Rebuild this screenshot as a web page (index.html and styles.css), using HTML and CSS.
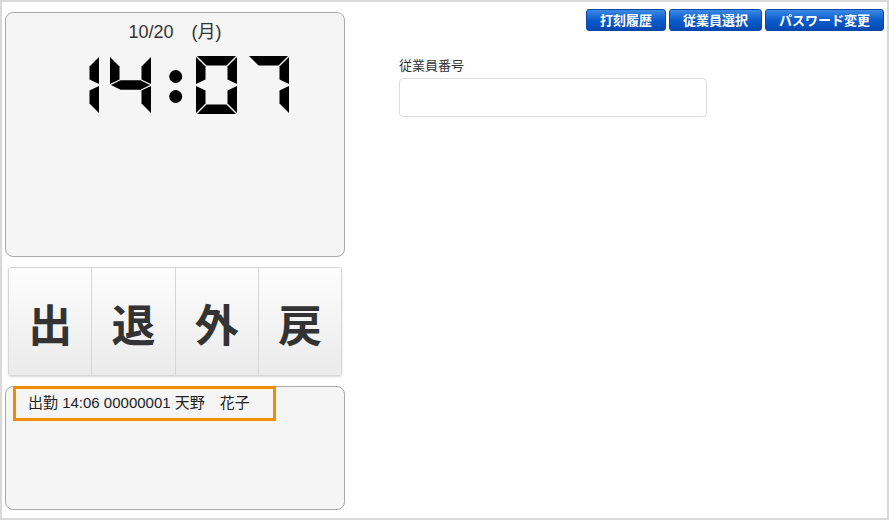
FILE: index.html
```html
<!DOCTYPE html>
<html lang="ja">
<head>
<meta charset="utf-8">
<title>打刻</title>
<link rel="stylesheet" href="styles.css">
</head>
<body>
<div class="frame">
  <div class="left">
    <div class="clock">
      <div class="date">10/20　(月)</div>
      <svg class="digits" width="339" height="66" viewBox="0 0 339 66" aria-label="14:07">
        <defs>
          <polygon id="sa" points="1,0 40,0 30.5,9.5 10.5,9.5"/>
          <polygon id="sb" points="41,1 41,28 31.5,23.5 31.5,10.5"/>
          <polygon id="sc" points="41,30 41,57 31.5,47.5 31.5,34.5"/>
          <polygon id="sd" points="1,58 40,58 30.5,48.5 10.5,48.5"/>
          <polygon id="se" points="0,30 9.5,34.5 9.5,47.5 0,57"/>
          <polygon id="sf" points="0,1 9.5,10.5 9.5,23.5 0,28"/>
          <polygon id="sg" points="1,29 10.5,24.25 30.5,24.25 40,29 30.5,33.75 10.5,33.75"/>
        </defs>
        <g fill="#000">
          <g transform="translate(52,6)"><use href="#sb"/><use href="#sc"/></g>
          <g transform="translate(104,6)"><use href="#sf"/><use href="#sg"/><use href="#sb"/><use href="#sc"/></g>
          <circle cx="169.7" cy="26.5" r="6.5"/>
          <circle cx="169.7" cy="46.5" r="6.5"/>
          <g transform="translate(190,6)"><use href="#sa"/><use href="#sb"/><use href="#sc"/><use href="#sd"/><use href="#se"/><use href="#sf"/></g>
          <g transform="translate(242,6)"><use href="#sa"/><use href="#sb"/><use href="#sc"/></g>
        </g>
      </svg>
    </div>
    <div class="stamps">
      <div class="stamp">出</div>
      <div class="stamp">退</div>
      <div class="stamp">外</div>
      <div class="stamp">戻</div>
    </div>
    <div class="log">
      <div class="log-row">出勤 14:06 00000001 天野　花子</div>
    </div>
  </div>
  <div class="right">
    <div class="toolbar">
      <div class="tbtn">打刻履歴</div>
      <div class="tbtn">従業員選択</div>
      <div class="tbtn">パスワード変更</div>
    </div>
    <div class="form">
      <div class="label">従業員番号</div>
      <div class="input"></div>
    </div>
  </div>
</div>
</body>
</html>
```

FILE: styles.css
```css
* { box-sizing: border-box; }
html, body { margin: 0; padding: 0; background: #fff; }
body {
  font-family: "Liberation Sans", "Noto Sans CJK JP", sans-serif;
  color: #333;
}
.frame {
  width: 889px;
  height: 520px;
  border: 2px solid #d9d9d9;
  display: flex;
}
.left {
  width: 343px;
  padding: 10px 0 0 3px;
  flex: none;
}
.clock {
  width: 340px;
  height: 245px;
  border: 1px solid #aaa;
  border-radius: 8px;
  background: #f5f5f5;
  padding-top: 9px;
}
.date {
  text-align: center;
  font-size: 18px;
  line-height: 20px;
  color: #333;
}
.digits {
  display: block;
  margin-top: 8px;
}
.stamps {
  display: flex;
  margin: 10px 3px 0;
  height: 109px;
  border: 1px solid #d6d6d6;
  border-radius: 3px;
  box-shadow: 0 1px 2px rgba(0,0,0,0.15);
  overflow: hidden;
}
.stamp {
  flex: 1;
  display: flex;
  align-items: center;
  justify-content: center;
  font-family: "Noto Sans CJK JP", sans-serif;
  font-weight: bold;
  font-size: 44px;
  color: #333;
  background: linear-gradient(#fdfdfd, #ebebeb);
  border-left: 1px solid #d6d6d6;
  padding-top: 2px;
}
.stamp:first-child { border-left: none; }
.log {
  margin-top: 10px;
  width: 340px;
  height: 124px;
  border: 1px solid #aaa;
  border-radius: 8px;
  background: #f5f5f5;
  padding: 0 7px;
}
.log-row {
  margin-top: -1px;
  width: 263px;
  height: 35px;
  border: 3px solid #f08c00;
  padding-left: 12px;
  font-size: 15px;
  line-height: 28px;
  color: #222;
}
.right {
  flex: 1;
  padding: 7px 3px 0 0;
}
.toolbar {
  display: flex;
  justify-content: flex-end;
  gap: 3px;
}
.tbtn {
  height: 22px;
  padding: 0 13px;
  border: 1px solid #0b47a0;
  border-radius: 3px;
  background: linear-gradient(#3a8ae6, #0d5ccc 50%, #0049b4);
  color: #fff;
  font-family: "Noto Sans CJK JP", sans-serif;
  font-weight: bold;
  font-size: 13px;
  line-height: 20px;
}
.form {
  margin: 26px 0 0 54px;
}
.label {
  font-size: 13px;
  line-height: 17px;
  margin-bottom: 4px;
  color: #333;
}
.input {
  width: 308px;
  height: 39px;
  border: 1px solid #dcdcdc;
  border-radius: 4px;
  background: #fff;
}
```
